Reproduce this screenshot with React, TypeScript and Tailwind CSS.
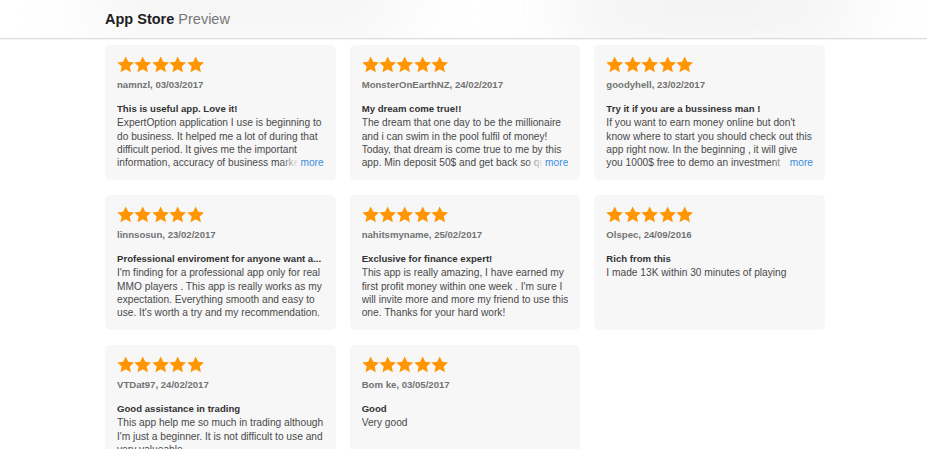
import React from 'react';

interface Review {
  author: string;
  date: string;
  title: string;
  body: string;
  more?: boolean;
}

const reviews: Review[] = [
  {
    author: 'namnzl',
    date: '03/03/2017',
    title: 'This is useful app. Love it!',
    body: 'ExpertOption application I use is beginning to do business. It helped me a lot of during that difficult period. It gives me the important information, accuracy of business market and news.',
    more: true
  },
  {
    author: 'MonsterOnEarthNZ',
    date: '24/02/2017',
    title: 'My dream come true!!',
    body: 'The dream that one day to be the millionaire and i can swim in the pool fulfil of money! Today, that dream is come true to me by this app. Min deposit 50$ and get back so quickly.',
    more: true
  },
  {
    author: 'goodyhell',
    date: '23/02/2017',
    title: 'Try it if you are a bussiness man !',
    body: "If you want to earn money online but don't know where to start you should check out this app right now. In the beginning , it will give you 1000$ free to demo an investment account.",
    more: true
  },
  {
    author: 'linnsosun',
    date: '23/02/2017',
    title: 'Professional enviroment for anyone want a...',
    body: "I'm finding for a professional app only for real MMO players . This app is really works as my expectation. Everything smooth and easy to use. It's worth a try and my recommendation."
  },
  {
    author: 'nahitsmyname',
    date: '25/02/2017',
    title: 'Exclusive for finance expert!',
    body: "This app is really amazing, I have earned my first profit money within one week . I'm sure I will invite more and more my friend to use this one. Thanks for your hard work!"
  },
  {
    author: 'Olspec',
    date: '24/09/2016',
    title: 'Rich from this',
    body: 'I made 13K within 30 minutes of playing'
  },
  {
    author: 'VTDat97',
    date: '24/02/2017',
    title: 'Good assistance in trading',
    body: "This app help me so much in trading although I'm just a beginner. It is not difficult to use and very valueable."
  },
  {
    author: 'Bom ke',
    date: '03/05/2017',
    title: 'Good',
    body: 'Very good'
  }
];

const Star = () => (
  <svg viewBox="0 0 20 19" className="w-[17.4px] h-[17px]">
    <polygon
      points="10,0.3 12.9,6.4 19.6,7.1 14.6,11.7 16,18.4 10,15 4,18.4 5.4,11.7 0.4,7.1 7.1,6.4"
      fill="#ff9500"
    />
  </svg>
);

const ReviewCard: React.FC<{ review: Review }> = ({ review }) => {
  return (
    <div className="h-[135px] rounded-[5px] bg-[#f7f7f7] px-3 pt-[11px] overflow-hidden">
      <div className="flex">
        {[0, 1, 2, 3, 4].map((i) => (
          <Star key={i} />
        ))}
      </div>
      <div className="mt-[6px] text-[9.6px] leading-[12px] font-bold text-[#737373]">
        {review.author}, {review.date}
      </div>
      <div className="mt-[11px] text-[9.6px] leading-[13.3px] font-bold text-[#333] whitespace-nowrap overflow-hidden">
        {review.title}
      </div>
      <div className="relative mt-[1px] max-h-[53.2px] overflow-hidden">
        <p className="text-[10.2px] leading-[13.3px] text-[#4a4a4a]">{review.body}</p>
        {review.more && (
          <div className="absolute right-0 top-[39.9px] flex h-[13.3px] text-[10.2px] leading-[13.3px]">
            <span className="w-[18px] bg-gradient-to-r from-[#f7f7f7]/0 to-[#f7f7f7]" />
            <span className="bg-[#f7f7f7] text-[#3a8ce0] pl-[1px]">more</span>
          </div>
        )}
      </div>
    </div>
  );
};

export default function App() {
  return (
    <div className="min-h-screen bg-white font-['Liberation_Sans',Arial,sans-serif]">
      {/* Header */}
      <header className="relative h-[39px] border-b border-[#dcdcdc] shadow-[0_1px_1px_rgba(0,0,0,0.04)] overflow-hidden">
        <div className="absolute left-[90px] top-[-30px] w-[320px] h-[60px] rounded-full bg-[#e8e8e8] blur-2xl opacity-70" />
        <div className="absolute left-[560px] top-[-20px] w-[300px] h-[55px] rounded-full bg-[#e6e6e6] blur-2xl opacity-80" />
        <div className="relative pl-[105px] pt-[10px] text-[14.5px] leading-[18px]">
          <span className="font-bold text-[#1d1d1f]">App Store</span>{' '}
          <span className="text-[#777]">Preview</span>
        </div>
      </header>

      {/* Reviews */}
      <div className="ml-[105px] mt-[6px] w-[720px] grid grid-cols-3 gap-x-[14px] gap-y-[15px]">
        {reviews.map((r) => (
          <ReviewCard key={r.author} review={r} />
        ))}
      </div>
    </div>
  );
}
